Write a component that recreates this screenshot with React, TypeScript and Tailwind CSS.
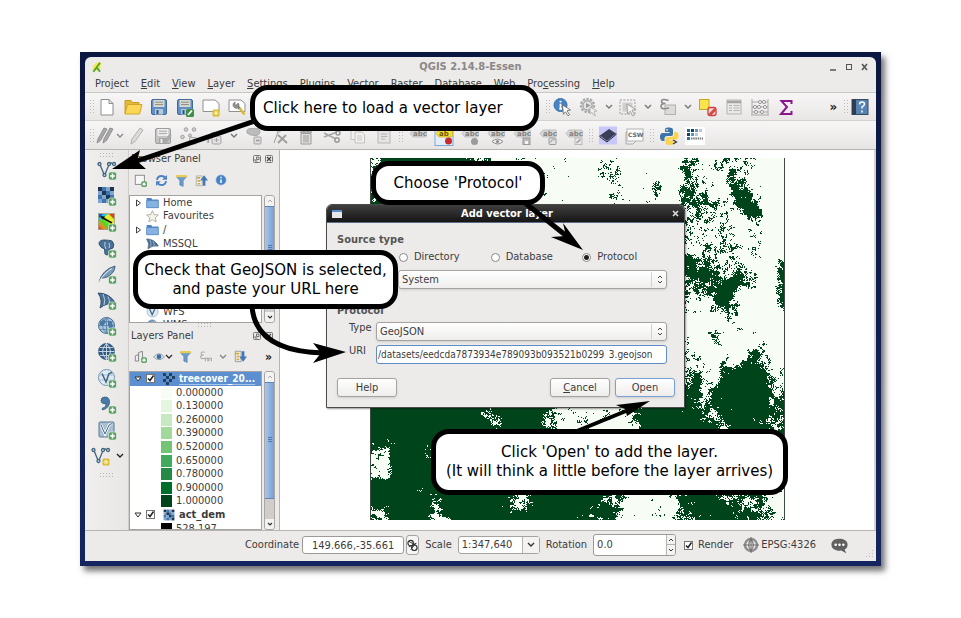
import React from "react";

const INK = "#3c3c3c";

/* ---------- tree cover raster ---------- */

const MAP_W = 415;
const MAP_H = 362;

// One digit per 10x10 block: 0 is bare ground, 9 is closed canopy.
const COVER = [
  "399999999955433211111012210100053034552100000",
  "499999999955433211121125310200054024641100001",
  "499999999954333211011012420240156402631010000",
  "699999999943333212110001440150065413983100010",
  "699999999943333211110001210120065442498100032",
  "699999999943333211110001010010044344389100000",
  "699999999943333210000000000000043434304010100",
  "699999999943333210000000000000032333424100000",
  "699999999943333210000000000000042333424100010",
  "699999999943333210000000000000022343425000030",
  "699999999943333210000000000000088443330029301",
  "699999999943333210000000000000089975553028200",
  "699999999943333210000000000000067466753018532",
  "699999999943333210000000000000064489411019764",
  "699999999943333210000000000000040178311017863",
  "699999999943333210000000000000022014520003974",
  "699999999943333210000000000000020103510001492",
  "699999999943333210000000000000010352113101392",
  "699999999943333210000000000000041131012410291",
  "699999999943333210000000000000054201017202363",
  "699999999943333210000000000000032115398501565",
  "699999999943333210000000000000055417999634685",
  "999999999999999999999999999999956349999844775",
  "999999999999999999999999999999977379999945677",
  "999999999999999999423112113699997589999856666",
  "999999999993999996312212124999987447988865558",
  "999999999999399994211312113899999757998655747",
  "999999999999799995321312213999999997999886568",
  "668999999999999999999999999999999999999999999",
  "429996899999999999999999999999999999999999999",
  "119999799999999999999999999999999999999999999",
  "329999999999999999999999999999999999999999999",
  "899986899999999999999999999999999999999999999",
  "999999699999994489999888641223577764677421299",
  "999999499999983599988776521111488986545521149",
  "349999299999987999998877631111378898877641128",
  "889999213799999999999977641211168999988522013",
];

function hash(x: number, y: number, s: number) {
  let h = Math.imul(x, 374761393) ^ Math.imul(y, 668265263) ^ Math.imul(s, 2147483647);
  h = Math.imul(h ^ (h >>> 13), 1274126177);
  h ^= h >>> 16;
  return (h >>> 0) / 4294967296;
}

function valueNoise(x: number, y: number, s: number) {
  const xi = Math.floor(x);
  const yi = Math.floor(y);
  const fx = x - xi;
  const fy = y - yi;
  const u = fx * fx * (3 - 2 * fx);
  const v = fy * fy * (3 - 2 * fy);
  const a = hash(xi, yi, s);
  const b = hash(xi + 1, yi, s);
  const c = hash(xi, yi + 1, s);
  const d = hash(xi + 1, yi + 1, s);
  return a + (b - a) * u + (c - a) * v + (a - b - c + d) * u * v;
}

function coverAt(x: number, y: number) {
  const gx = Math.max(0, x / 10 - 0.5);
  const gy = Math.max(0, y / 10 - 0.5);
  const c = Math.min(43, Math.floor(gx));
  const r = Math.min(COVER.length - 2, Math.floor(gy));
  const fx = gx - c;
  const fy = Math.min(1, gy - r);
  const g = (rr: number, cc: number) => Number(COVER[rr][cc]);
  return (
    (g(r, c) * (1 - fx) + g(r, c + 1) * fx) * (1 - fy) +
    (g(r + 1, c) * (1 - fx) + g(r + 1, c + 1) * fx) * fy
  );
}

function buildCoverPath() {
  let d = "";
  for (let y = 0; y < MAP_H; y++) {
    let start = -1;
    for (let x = 0; x <= MAP_W; x++) {
      let dark = false;
      if (x < MAP_W) {
        const n =
          valueNoise(x / 8, y / 9, 1) * 0.3 +
          valueNoise(x / 3, y / 3, 2) * 0.4 +
          hash(x, y, 3) * 0.3;
        const t = Math.min(1, Math.max(0, (n - 0.5) * 1.6 + 0.5));
        dark = coverAt(x, y) / 9 > 0.1 + t * 0.86;
      }
      if (dark && start < 0) start = x;
      if (!dark && start >= 0) {
        d += `M${start} ${y}h${x - start}v1h${start - x}z`;
        start = -1;
      }
    }
  }
  return d;
}

const coverPath = buildCoverPath();

/* ---------- small drawings ---------- */

type P = { children?: React.ReactNode; className?: string };

function Ico({ children, className = "h-5 w-5" }: P) {
  return (
    <svg viewBox="0 0 20 20" className={`shrink-0 ${className}`} fill="none" aria-hidden="true">
      {children}
    </svg>
  );
}

function Tool({ label, children, className = "w-[26px]" }: P & { label: string }) {
  return (
    <button type="button" aria-label={label} className={`flex h-6 shrink-0 items-center justify-center ${className}`}>
      {children}
    </button>
  );
}

function Chevron({ color = "#555" }: { color?: string }) {
  return (
    <svg viewBox="0 0 8 6" className="h-[6px] w-2 shrink-0" fill="none" aria-hidden="true">
      <path d="M1 1l3 3 3-3" stroke={color} strokeWidth="1.4" />
    </svg>
  );
}

function Handle() {
  return (
    <svg viewBox="0 0 4 14" className="h-[14px] w-1 shrink-0" aria-hidden="true">
      {[0, 3, 6, 9, 12].map((y) => (
        <g key={y} fill="#bdbab8">
          <rect x="0" y={y} width="1" height="1" />
          <rect x="3" y={y} width="1" height="1" />
        </g>
      ))}
    </svg>
  );
}

function GripRow() {
  return (
    <svg viewBox="0 0 13 4" className="h-1 w-[13px] shrink-0" aria-hidden="true">
      {[0, 3, 6, 9, 12].map((x) => (
        <g key={x} fill="#b5b2b0">
          <rect x={x} y="0" width="1" height="1" />
          <rect x={x} y="3" width="1" height="1" />
        </g>
      ))}
    </svg>
  );
}

function Plus() {
  return (
    <g>
      <rect x="11.500" y="12" width="8" height="8" rx="2" fill="#5a9e62" stroke="#e9f3ea" strokeWidth="0.600" />
      <path d="M15.500 13.600v4.800M13.100 16h4.800" stroke="#fff" strokeWidth="1.600" />
    </g>
  );
}

function Star() {
  return (
    <g>
      <rect x="11.500" y="12.500" width="7" height="7" rx="1.500" fill="#d8b92c" />
      <path d="M15 13.500v5M12.500 16h5M13.300 14.300l3.400 3.400M16.700 14.300l-3.400 3.400" stroke="#fff6b8" strokeWidth="0.900" />
    </g>
  );
}

function Sheet() {
  return <path d="M4 2.500h8l4 4v11.500h-12z M12 2.500v4h4" fill="#fff" stroke="#8c8c8c" />;
}

function Floppy({ gray = false }: { gray?: boolean }) {
  return (
    <g>
      <rect x="2.500" y="2.500" width="15" height="15" rx="1.500" fill={gray ? "#c4c3c2" : "#5f8fc4"} stroke={gray ? "#9d9d9d" : "#3e6b9e"} />
      <rect x="4.500" y="3" width="11" height="7" fill={gray ? "#ececec" : "#d9d9d0"} />
      <path d="M6 5.200h8M6 7.600h8" stroke={gray ? "#a5a5a5" : "#8b8b83"} />
      <rect x="6" y="12" width="8" height="5.500" fill={gray ? "#a5a5a5" : "#b7c9dc"} />
      <rect x="7.500" y="13" width="2" height="4" fill={gray ? "#eee" : "#2f5580"} />
    </g>
  );
}

function Vee({ color = "#41647f" }: { color?: string }) {
  return (
    <g stroke={color} strokeWidth="1.300">
      <path d="M3 4.500l4.500 11L12 4.500q2-3 4.500 0" />
      <g fill="#dfe8ef">
        <circle cx="2.500" cy="4" r="1.500" />
        <circle cx="7.500" cy="15" r="1.500" />
        <circle cx="12" cy="4" r="1.500" />
        <circle cx="17" cy="4" r="1.500" />
      </g>
    </g>
  );
}

const CHECK_TONES = ["#3f74ad", "#1f3650", "#7ea4cf"];
const CHECK_CELLS = [1, 0, 2, 1, 2, 1, 0, 2, 0, 2, 1, 0, 2, 0, 2, 1];

function Checks({ w = 16 }: { w?: number }) {
  const s = w / 4;
  return (
    <g>
      {CHECK_CELLS.map((t, i) => (
        <rect key={i} x={1 + (i % 4) * s} y={1 + Math.floor(i / 4) * s} width={s} height={s} fill={CHECK_TONES[t]} />
      ))}
    </g>
  );
}

function Globe({ dark = false }: { dark?: boolean }) {
  const f = dark ? "#33587c" : "#a9c5de";
  const s = dark ? "#cfe0ef" : "#5d85a8";
  return (
    <g>
      <circle cx="9.500" cy="9.500" r="8" fill={f} stroke="#456a8c" />
      <path d="M1.500 9.500h16M3 5.500h13M3 13.500h13M9.500 1.500v16M9.500 1.500q-8 8 0 16M9.500 1.500q8 8 0 16" stroke={s} strokeWidth="0.900" />
      {!dark && <path d="M3 6l4-3 2 3-3 4-3-1zM11 5l4 1 1 5-3 3-2-5z" fill="#4b77a1" />}
    </g>
  );
}

function Sail() {
  return (
    <g>
      <path d="M1 3q12 0 18 11-9-2-16 4 3-8-2-15z" fill="#4a7096" stroke="#324f6d" />
      <path d="M6 4q3 6 1 11M11 6.500q2 4 1.500 7.500" stroke="#b9cde0" />
    </g>
  );
}

function Funnel() {
  return (
    <g>
      <path d="M2 4h16l-5.500 6v9l-5-2v-7z" fill="#6c9bcf" stroke="#4776ab" />
      <rect x="1.500" y="1.500" width="17" height="3.500" rx="1" fill="#e4cd52" />
    </g>
  );
}

function Abc({ active = false, children }: { active?: boolean; children?: React.ReactNode }) {
  return (
    <Ico>
      {active && <rect x="1" y="0.500" width="18" height="19" fill="#e4eefb" stroke="#7ba7e0" />}
      <g transform="translate(0 1)">
        <path d="M2 6.500l3-3.500h12q1.500 0 1.500 1.500v4Q18.500 10 17 10H5z" fill={active ? "#f3df3c" : "#d9d8d7"} stroke={active ? "#c9ad1e" : "#b5b5b5"} strokeWidth="0.800" />
        <text x="5" y="9" fontSize="7" fontWeight="700" fontFamily="DejaVu Sans" fill={active ? "#6b5b08" : "#828282"}>
          {active ? "ab" : "abc"}
        </text>
      </g>
      {children}
    </Ico>
  );
}

/* ---------- toolbars ---------- */

const MENU: [string, string, string][] = [
  ["Pro", "j", "ect"],
  ["", "E", "dit"],
  ["", "V", "iew"],
  ["", "L", "ayer"],
  ["", "S", "ettings"],
  ["", "P", "lugins"],
  ["Vect", "o", "r"],
  ["", "R", "aster"],
  ["", "D", "atabase"],
  ["", "W", "eb"],
  ["Pro", "c", "essing"],
  ["", "H", "elp"],
];

function MainToolbar() {
  return (
    <div className="flex h-7 items-center border-b border-[#d3d0ce] bg-linear-to-b from-[#f7f6f6] to-[#e9e7e6] pl-[5px]" role="toolbar" aria-label="Project toolbar">
      <Handle />
      <Tool label="New project"><Ico><Sheet /></Ico></Tool>
      <Tool label="Open project">
        <Ico>
          <path d="M2 17V3.500h6l1.500 2H16V8" fill="#e3b93a" stroke="#c79a24" />
          <path d="M2 17l2.500-9.500H19L16.500 17z" fill="#fbd755" stroke="#d2a62d" />
        </Ico>
      </Tool>
      <Tool label="Save project"><Ico><Floppy /></Ico></Tool>
      <Tool label="Save project as">
        <Ico>
          <Floppy />
          <rect x="11" y="12" width="8" height="8" rx="1.500" fill="#3f8f4b" />
          <path d="M13 18l4-4.500" stroke="#fff" strokeWidth="1.800" />
        </Ico>
      </Tool>
      <Tool label="New print composer">
        <Ico><path d="M2 3h12l4 3.500v8H2z" fill="#fff" stroke="#909090" /><Star /></Ico>
      </Tool>
      <Tool label="Composer manager">
        <Ico>
          <path d="M2 3h12l4 3.500v8H2z" fill="#fff" stroke="#909090" />
          <path d="M9 8l4 4" stroke="#777" strokeWidth="2.500" />
          <path d="M12.500 11l5 6.500" stroke="#d9b93a" strokeWidth="2.600" />
          <path d="M6 8q0-2 2-3v3l2 .5 1-2.500q2 2 .5 4T8 11q-2-1-2-3z" fill="#999" stroke="#6f6f6f" strokeWidth="0.700" />
        </Ico>
      </Tool>
      <div className="w-[296px] shrink-0" />
      <Handle />
      <Tool label="Identify features">
        <Ico>
          <circle cx="7.500" cy="8" r="6.500" fill="#4583c4" stroke="#3a70aa" />
          <path d="M7.500 6.800v5M6.300 11.800h2.600M7.500 3.800v1.600" stroke="#fff" strokeWidth="1.800" />
          <path d="M9.500 8l8 5-3.500.8 2.500 4-1.500 1-2.600-4-2 2.500z" fill="#fff" stroke="#6f6f6f" strokeWidth="0.900" />
        </Ico>
      </Tool>
      <Tool label="Run feature action">
        <Ico>
          <circle cx="8.500" cy="8.500" r="6.500" stroke="#a9a9a9" strokeWidth="2.400" strokeDasharray="2.200 1.400" fill="#d8d7d6" />
          <circle cx="8.500" cy="8.500" r="4.500" stroke="#9b9b9b" fill="#e4e4e4" />
          <path d="M7 6l4.500 2.500L7 11z" fill="#999" />
          <path d="M11 10l7 4-3 .8 1.500 3.500-1.500.5-2-3.300-2 1.500z" fill="#eee" stroke="#aaa" strokeWidth="0.800" />
        </Ico>
      </Tool>
      <Tool label="Action options" className="w-[13px]"><Chevron color="#777" /></Tool>
      <Tool label="Select features">
        <Ico>
          <rect x="2" y="3" width="15" height="14" stroke="#999" strokeDasharray="2 1.400" />
          <rect x="4.500" y="5.500" width="10" height="9" fill="#cfcecd" />
          <path d="M9 7l9 5.500-4 .7 2.500 4.800-2 .8-2.300-4.600L9.500 17z" fill="#f4f4f4" stroke="#999" strokeWidth="0.900" />
        </Ico>
      </Tool>
      <Tool label="Select options" className="w-[14px]"><Chevron color="#777" /></Tool>
      <Tool label="Select by expression">
        <Ico>
          <rect x="7" y="8" width="10.500" height="9.500" fill="#dcdbda" stroke="#b0b0b0" />
          <path d="M10.500 3.500Q3.500 1 3.500 4.500q0 2 4 2-4.500 0-4.500 3 0 3.500 8 1.500" stroke="#8a8a8a" strokeWidth="1.600" />
        </Ico>
      </Tool>
      <Tool label="Expression options" className="w-[14px]"><Chevron color="#777" /></Tool>
      <Tool label="Deselect all">
        <Ico>
          <rect x="1.500" y="2.500" width="9.500" height="10" fill="#fbe34e" stroke="#c7a91f" />
          <rect x="10" y="10.500" width="8" height="8" rx="2" fill="#f7d4d2" stroke="#cf3e3a" strokeWidth="1.300" />
          <path d="M11 17.500l6-6M12.500 18l5-5" stroke="#cf3e3a" strokeWidth="1.200" />
        </Ico>
      </Tool>
      <Tool label="Open attribute table">
        <Ico>
          <rect x="3" y="3" width="14" height="14" fill="#e9e9e8" stroke="#b4b3b2" />
          <path d="M3 5h14" stroke="#a5a4a3" strokeWidth="2.500" />
          <path d="M5 8.500h3M9.500 8.500h6M5 11h3M9.500 11h6M5 13.500h3M9.500 13.500h6" stroke="#b5b4b3" />
        </Ico>
      </Tool>
      <Tool label="Field calculator">
        <Ico>
          <path d="M2 2v16M18 2v16M2 5h16M2 10h16M2 15h16M1 18h18" stroke="#a8a7a6" />
          <g fill="#f3f3f3" stroke="#8f8f8f" strokeWidth="0.900">
            <circle cx="10" cy="5" r="1.600" /><circle cx="14" cy="5" r="1.600" />
            <circle cx="5" cy="10" r="1.600" /><circle cx="9" cy="10" r="1.600" /><circle cx="15" cy="10" r="1.600" />
            <circle cx="6" cy="15" r="1.600" /><circle cx="12" cy="15" r="1.600" />
          </g>
        </Ico>
      </Tool>
      <Tool label="Statistics">
        <Ico><path d="M15.500 7V4H5.500L11 10l-6 7H15.500V14" stroke="#8b158b" strokeWidth="2" /></Ico>
      </Tool>
      <span className="ml-auto pr-[7px] text-[13px] font-bold leading-4 text-[#222]">»</span>
      <Handle />
      <Tool label="Help contents" className="mr-1 w-6">
        <Ico>
          <rect x="2" y="2.500" width="16" height="15" fill="#5583b4" stroke="#3a4a5d" />
          <rect x="2" y="2.500" width="4" height="15" fill="#2f3d4e" />
          <path d="M9.500 7.500q0-2.500 2.500-2.500t2.500 2q0 1.500-2.500 3v1.500M12 13.500v2" stroke="#fff" strokeWidth="1.500" />
        </Ico>
      </Tool>
    </div>
  );
}

function EditToolbar() {
  return (
    <div className="flex h-7 items-center bg-linear-to-b from-[#f7f6f6] to-[#e7e5e4] pl-[5px] pt-px" role="toolbar" aria-label="Digitizing toolbar">
      <Handle />
      <Tool label="Current edits" className="w-[22px]">
        <Ico>
          <path d="M2 17l1-4L9 2l3 1-6.500 11.500zM8 17l1-4 6-11 3 1-6.500 11.500z" fill="#a9a9a9" stroke="#919191" />
        </Ico>
      </Tool>
      <Tool label="Edit options" className="w-2"><Chevron color="#8a8a8a" /></Tool>
      <Tool label="Toggle editing" className="w-[26px]">
        <Ico><path d="M4 18l1-5L13 2l3 2-8 11.500z" fill="#dcdbda" stroke="#b3b2b1" /></Ico>
      </Tool>
      <Tool label="Save edits">
        <Ico><Floppy gray /><path d="M12 17l5.500-8" stroke="#a9a9a9" strokeWidth="3" /></Ico>
      </Tool>
      <Tool label="Add feature">
        <Ico>
          <g fill="#cfcfce" stroke="#a2a2a2"><circle cx="7" cy="3.500" r="1.800" /><circle cx="15" cy="3.500" r="1.800" /><circle cx="3.500" cy="11" r="1.800" /><circle cx="11" cy="9.500" r="1.500" /></g>
          <rect x="10.500" y="11.500" width="7" height="6.500" rx="1.500" fill="#e5e5e4" stroke="#a5a5a5" />
        </Ico>
      </Tool>
      <Tool label="Move feature" className="w-[25px]">
        <Ico>
          <path d="M3 17q1-12 8-10t6-3" stroke="#aaa" strokeWidth="1.800" />
          <rect x="7" y="10" width="9" height="8" rx="1.500" fill="#e3e2e1" stroke="#a1a1a1" />
          <path d="M11.500 12v4M9.500 14h4" stroke="#a1a1a1" />
        </Ico>
      </Tool>
      <Tool label="Digitizing options" className="w-[14px]"><Chevron color="#777" /></Tool>
      <Tool label="Rotate feature">
        <Ico>
          <path d="M3 7q-1-5 5-4.500 8-1 8 3T11 9.500 3 7z" fill="#bbb" stroke="#a8a8a8" />
          <rect x="10" y="11" width="7" height="7" rx="1" fill="#ddd" stroke="#a3a3a3" />
          <path d="M12 14.500h3.500" stroke="#999" strokeWidth="1.500" />
        </Ico>
      </Tool>
      <Tool label="Node tool">
        <Ico>
          <path d="M4 17L8 6l5-2" stroke="#9d9d9d" />
          <path d="M8 9l9 8M16 9l-8 8" stroke="#9f9f9f" strokeWidth="2" />
          <circle cx="8" cy="6" r="1.500" fill="#bbb" />
        </Ico>
      </Tool>
      <Tool label="Delete selected">
        <Ico>
          <path d="M4 6h12M8 6V4h4v2" stroke="#9a9a9a" strokeWidth="1.500" />
          <path d="M5 7.500h10V18H5z" fill="#dfdedd" stroke="#9a9a9a" />
          <path d="M8 9v7.500M10 9v7.500M12 9v7.500" stroke="#9a9a9a" />
        </Ico>
      </Tool>
      <Tool label="Cut features">
        <Ico>
          <path d="M2 7l12 6M15 6L2 11" stroke="#a8a8a8" strokeWidth="1.800" />
          <circle cx="15" cy="14" r="2.200" stroke="#9a9a9a" strokeWidth="1.500" /><circle cx="16" cy="7" r="2" stroke="#9a9a9a" strokeWidth="1.500" />
        </Ico>
      </Tool>
      <Tool label="Copy features">
        <Ico>
          <rect x="3" y="2.500" width="9" height="11" fill="#f1f0ef" stroke="#c2c1c0" />
          <path d="M7 6h7l2.500 2.500V17H7z" fill="#f1f0ef" stroke="#c2c1c0" />
          <path d="M9 10h5M9 12h5M9 14h5" stroke="#c8c7c6" />
        </Ico>
      </Tool>
      <Tool label="Paste features">
        <Ico>
          <rect x="4" y="3" width="12" height="14" fill="#e5e4e3" stroke="#b7b6b5" />
          <rect x="7" y="1.500" width="6" height="3" fill="#a9a8a7" />
          <path d="M7 8h6M7 10.500h6M7 13h4" stroke="#b4b3b2" />
        </Ico>
      </Tool>
      <div className="flex w-2 justify-center"><Handle /></div>
      <Tool label="Layer labeling options"><Abc /></Tool>
      <Tool label="Highlight pinned labels"><Abc active><circle cx="14.500" cy="15" r="3.500" fill="#c92a2f" /></Abc></Tool>
      <Tool label="Pin labels"><Abc><circle cx="14.500" cy="15.500" r="3.500" fill="#9b9b9b" /></Abc></Tool>
      <Tool label="Show or hide labels"><Abc><path d="M6 15.500q5-5 11 0-5 5-11 0z" fill="#eee" stroke="#8d8d8d" /><circle cx="11.500" cy="15.500" r="1.600" fill="#8d8d8d" /></Abc></Tool>
      <Tool label="Move label"><Abc><rect x="11" y="12" width="7" height="6.500" fill="#bbb" stroke="#999" /><rect x="13" y="15" width="3" height="3" fill="#f5f5f5" /></Abc></Tool>
      <Tool label="Rotate label"><Abc><rect x="11" y="12" width="7" height="6.500" rx="1" fill="#e3e3e3" stroke="#999" /><path d="M12.500 16.500q0-3 4-3" stroke="#999" /></Abc></Tool>
      <Tool label="Change label"><Abc><rect x="11" y="12" width="7" height="6.500" fill="#e9e9e9" stroke="#bbb" /><path d="M12.500 17l4-3.500" stroke="#999" strokeWidth="1.500" /></Abc></Tool>
      <div className="flex w-2 justify-center"><Handle /></div>
      <Tool label="Metasearch catalogue">
        <Ico><rect x="1" y="0.500" width="18" height="18" fill="#c7c8f7" /><path d="M2 9.500L11 3l7 4.500L9 15z" fill="#3b3e55" /><path d="M2 9.500V11l7 5 9-7.500V7.500" stroke="#23253a" /></Ico>
      </Tool>
      <Tool label="CSW search">
        <Ico>
          <path d="M2 18V6h8M2 18h7l3-3" fill="#f2f2f2" stroke="#aaa" />
          <rect x="3" y="3" width="16" height="12" fill="#fff" stroke="#b2b2b2" />
          <text x="4" y="11" fontSize="6" fontWeight="700" fontFamily="DejaVu Sans" fill="#666">CSW</text>
        </Ico>
      </Tool>
      <div className="flex w-[9px] justify-center"><Handle /></div>
      <Tool label="Python console">
        <Ico>
          <path d="M10 1.500c-4 0-4 1.200-4 2.500v2h4.500v1H4c-2.500 0-3 2-3 4s1 4 3 4h1.500v-2.500c0-1.500 1-2.500 2.500-2.500h4c1.500 0 2-1 2-2V4c0-1.500-1-2.500-4-2.500z" fill="#3b74a8" />
          <path d="M10.500 19c4 0 4-1.200 4-2.500v-2H10v-1h6.500c2.500 0 3-2 3-4s-1-3.500-3-3.500H15V8.500C15 10 14 11 12.500 11h-4c-1.500 0-2 1-2 2v3.500c0 1.500 1 2.500 4 2.500z" fill="#f9d44b" />
          <circle cx="8" cy="3.800" r="0.900" fill="#fff" />
          <path d="M14 14l3.500 2-3.500 2" stroke="#333" strokeWidth="1.200" />
        </Ico>
      </Tool>
      <Tool label="GeoScript services">
        <Ico>
          <rect x="0" y="1" width="20" height="18" fill="#fff" />
          <g>
            <rect x="2" y="3" width="3" height="3" fill="#1d6a8a" /><rect x="6" y="3" width="3" height="3" fill="#15435e" /><rect x="10" y="3" width="3" height="3" fill="#5c9ab3" /><rect x="14" y="3" width="3" height="3" fill="#c3c3dd" />
            <rect x="2" y="7" width="3" height="3" fill="#15435e" /><rect x="6" y="7" width="3" height="3" fill="#5c9ab3" /><rect x="10" y="7" width="3" height="3" fill="#c3c3dd" /><rect x="2" y="11" width="3" height="3" fill="#2c7898" />
          </g>
          <path d="M6 12.500h12" stroke="#777" strokeWidth="2" strokeDasharray="1.500 0.700" />
        </Ico>
      </Tool>
    </div>
  );
}

function LayerToolbar() {
  return (
    <div className="flex w-11 shrink-0 flex-col items-center border-r border-[#cfccca] bg-linear-to-r from-[#f0efee] to-[#e9e7e6] pt-[3px]" role="toolbar" aria-label="Manage layers">
      <GripRow />
      <div className="grid auto-rows-[26px] items-center justify-items-center">
        <Tool label="Add vector layer"><Ico><Vee /><Plus /></Ico></Tool>
        <Tool label="Add raster layer"><Ico><Checks /><Plus /></Ico></Tool>
        <Tool label="Add raster colour layer">
          <Ico>
            <defs>
              <linearGradient id="rainbow" x1="1" y1="0" x2="0" y2="1">
                <stop offset="0" stopColor="#9bd92f" /><stop offset=".35" stopColor="#f4ef2b" /><stop offset=".6" stopColor="#41d92f" />
                <stop offset=".8" stopColor="#f08f1c" /><stop offset="1" stopColor="#df261f" />
              </linearGradient>
            </defs>
            <rect x="1.500" y="1.500" width="16" height="16" fill="url(#rainbow)" stroke="#888" strokeWidth="0.600" />
            <path d="M2 2h9L2 9z" fill="#26c5e8" />
            <path d="M2 2h4L2 6z" fill="#2d3fe0" />
            <path d="M17 2v5l-5-5z" fill="#e8391f" />
            <path d="M4 5l11 6" stroke="#111" strokeWidth="1.800" /><path d="M3 4l5 .5-2 3z" fill="#111" /><Plus />
          </Ico>
        </Tool>
        <Tool label="Add PostGIS layer">
          <Ico><path d="M2 6q0-4 5-4t8 1q3 3 1 7l-3 1-1 5q-2 2-4 0l-.5-5q-4-1-5.500-5z" fill="#4a7196" stroke="#33536f" /><path d="M8 4q-1 4 1 7M12 5q1 3 0 5" stroke="#bcd0e2" /><Plus /></Ico>
        </Tool>
        <Tool label="Add SpatiaLite layer">
          <Ico><path d="M2 18Q5 6 18 2q0 7-8 11-3 1-5 1" fill="#7c9bb8" stroke="#41607c" /><path d="M2 18Q7 9 15 4.500" stroke="#e6eef5" /><Plus /></Ico>
        </Tool>
        <Tool label="Add MSSQL layer"><Ico><Sail /><Plus /></Ico></Tool>
        <Tool label="Add WMS layer"><Ico><Globe /><Plus /></Ico></Tool>
        <Tool label="Add WCS layer"><Ico><Globe dark /><Plus /></Ico></Tool>
        <Tool label="Add WFS layer">
          <Ico><circle cx="9.500" cy="9.500" r="8" fill="#dfe9f2" stroke="#6f93b3" /><path d="M2 7h15M2 12h15" stroke="#a5bfd6" /><path d="M5 5.500l4 8.500 3-8.500 3-1" stroke="#41647f" strokeWidth="1.500" /><Plus /></Ico>
        </Tool>
        <Tool label="Add delimited text layer">
          <Ico><path d="M5 14.500q5-1.500 4-5-4.500 1-5-3 0-3.500 4-3.500 4.500 0 4.500 5 0 6-7 8z" fill="#4a7ba8" stroke="#36597b" strokeWidth="0.800" /><Plus /></Ico>
        </Tool>
        <Tool label="Add virtual layer">
          <Ico><rect x="2" y="2" width="15" height="15" rx="1" fill="#a9bfd3" stroke="#587892" /><path d="M4 5l4 9 4-9 3-1.500" stroke="#fff" strokeWidth="2.500" /><path d="M4 5l4 9 4-9 3-1.500" stroke="#41647f" /><Plus /></Ico>
        </Tool>
        <div className="flex items-center">
          <Tool label="New shapefile layer"><Ico><Vee /><Star /></Ico></Tool>
          <Tool label="New layer options" className="w-3"><Chevron color="#222" /></Tool>
        </div>
      </div>
      <div className="pt-1"><GripRow /></div>
    </div>
  );
}

/* ---------- dock panels ---------- */

function PanelTitle({ text }: { text: string }) {
  return (
    <div className="flex h-[17px] items-center gap-1 pl-[2px] pr-[6px]">
      <h2 className="grow">{text}</h2>
      <button type="button" aria-label={`Float ${text}`}>
        <svg viewBox="0 0 8 8" className="h-2 w-2" fill="none"><rect x=".5" y=".5" width="7" height="7" rx="1" stroke="#777" /><path d="M3.500 2h2.500v2.500H3.500zM2 4v2h2.500" stroke="#555" strokeWidth=".8" /></svg>
      </button>
      <button type="button" aria-label={`Close ${text}`}>
        <svg viewBox="0 0 8 8" className="h-2 w-2" fill="none"><rect x=".5" y=".5" width="7" height="7" rx="1" stroke="#777" /><path d="M2 2l4 4M6 2L2 6" stroke="#444" strokeWidth="1.200" /></svg>
      </button>
    </div>
  );
}

function ScrollBar({ className = "" }: { className?: string }) {
  return (
    <div className="ml-[2px] flex w-[11px] shrink-0 flex-col rounded-t-[3px] rounded-b-[3px] border border-[#a9a6a4] bg-[#d0cdcb]" aria-hidden="true">
      <div className="flex h-[10px] shrink-0 items-center justify-center rounded-t-[2px] bg-[#f4f3f2]">
        <svg viewBox="0 0 6 4" className="h-1 w-[6px]" fill="none"><path d="M1 3l2-2 2 2" stroke="#aaa" /></svg>
      </div>
      <div className={`flex items-center justify-center border-y border-[#5c86bd] bg-linear-to-r from-[#a9c6ea] to-[#76a0d6] ${className}`}>
        <svg viewBox="0 0 4 6" className="h-[6px] w-1"><path d="M0 .5h4M0 2.500h4M0 4.500h4" stroke="#4d78b0" /></svg>
      </div>
      <div className="grow" />
      <div className="flex h-[10px] shrink-0 items-center justify-center rounded-b-[2px] bg-[#f4f3f2]">
        <svg viewBox="0 0 6 4" className="h-1 w-[6px]" fill="none"><path d="M1 1l2 2 2-2" stroke="#333" strokeWidth="1.200" /></svg>
      </div>
    </div>
  );
}

function Folder() {
  return (
    <Ico className="h-[13px] w-[13px]">
      <path d="M1 3h7l1.500 2.500H19V18H1z" fill="#4e82bd" />
      <path d="M1 7h18v11H1z" fill="#86b2e2" stroke="#4e82bd" />
    </Ico>
  );
}

const BROWSER: { name: string; branch?: boolean; icon: React.ReactNode; row: string }[] = [
  { name: "Home", row: "row-start-1", branch: true, icon: <Folder /> },
  { name: "Favourites", row: "row-start-2", icon: <Ico className="h-[13px] w-[13px]"><path d="M10 1l2.700 6 6.300.7-4.700 4.200 1.400 6.300L10 15l-5.700 3.200 1.400-6.300L1 7.700 7.300 7z" fill="#f5f4ea" stroke="#a9a897" strokeWidth="1.300" /></Ico> },
  { name: "/", row: "row-start-3", branch: true, icon: <Folder /> },
  { name: "MSSQL", row: "row-start-4", icon: <Ico className="h-[13px] w-[13px]"><Sail /></Ico> },
  { name: "WFS", row: "row-start-9", icon: <Ico className="h-[13px] w-[13px]"><circle cx="10" cy="10" r="8.500" fill="#dfe9f2" stroke="#8aa9c4" /><path d="M5 5l4.500 10L14 5" stroke="#41647f" strokeWidth="2" /></Ico> },
  { name: "WMS", row: "row-start-10", icon: <Ico className="h-[13px] w-[13px]"><Globe /></Ico> },
];

function BrowserPanel() {
  return (
    <section aria-label="Browser Panel">
      <PanelTitle text="Browser Panel" />
      <div className="flex h-7 items-center pb-[2px]">
        <Tool label="Add layer" className="w-[22px]">
          <Ico className="h-[13px] w-[13px]"><rect x="2" y="2" width="14" height="14" fill="#f7f7f6" stroke="#8c8c8c" strokeWidth="1.500" /><rect x="11" y="11" width="9" height="9" rx="3" fill="#5a9e62" /><path d="M15.500 12.500v6M12.500 15.500h6" stroke="#fff" strokeWidth="1.800" /></Ico>
        </Tool>
        <Tool label="Refresh" className="w-5">
          <Ico className="h-[13px] w-[13px]"><path d="M3 9q1-6 7-6 4 0 6 3M17 11q-1 6-7 6-4 0-6-3" stroke="#4d83c4" strokeWidth="3" /><path d="M18.500 1.500V9H11zM1.500 18.500V11H9z" fill="#4d83c4" /></Ico>
        </Tool>
        <Tool label="Filter browser" className="w-5"><Ico className="h-[13px] w-[13px]"><Funnel /></Ico></Tool>
        <Tool label="Collapse all" className="w-5">
          <Ico className="h-[13px] w-[13px]"><path d="M2 3h9v15H2z" fill="#eee" stroke="#999" /><path d="M3 6h5M4 10.500h4M4 15h4" stroke="#d9a93c" strokeWidth="2.500" /><path d="M12 18V10H8l6-8 6 8h-4v8z" fill="#4378b5" /></Ico>
        </Tool>
        <Tool label="Properties" className="w-5">
          <Ico className="h-3 w-3"><circle cx="10" cy="10" r="8.500" fill="#4583c4" stroke="#8fb4de" /><path d="M10 9v6M10 4.500v2.500" stroke="#fff" strokeWidth="2.500" /></Ico>
        </Tool>
      </div>
      <div className="flex h-[128px]">
        <div className="w-[133px] overflow-hidden border border-[#a5a2a0] bg-white">
          <ul className="grid h-[136px] grid-rows-[repeat(10,minmax(0,1fr))]">
            {BROWSER.map((b) => (
              <li key={b.name} className={`flex items-center gap-1 pl-[5px] leading-3 ${b.row}`}>
                <svg viewBox="0 0 7 8" className="h-2 w-[7px]" fill="none">{b.branch && <path d="M1.500 1v6l4-3z" stroke="#444" />}</svg>
                {b.icon}
                <span>{b.name}</span>
              </li>
            ))}
          </ul>
        </div>
        <ScrollBar className="h-[84px]" />
      </div>
    </section>
  );
}

const CLASSES: [string, string][] = [
  ["0.000000", "bg-[#f7fcf5]"],
  ["0.130000", "bg-[#e5f5e0]"],
  ["0.260000", "bg-[#c7e9c0]"],
  ["0.390000", "bg-[#a1d99b]"],
  ["0.520000", "bg-[#74c476]"],
  ["0.650000", "bg-[#41ab5d]"],
  ["0.780000", "bg-[#238b45]"],
  ["0.900000", "bg-[#006d2c]"],
  ["1.000000", "bg-[#00441b]"],
];

function Tick({ label }: { label: string }) {
  return (
    <span className="relative flex h-[9px] w-[9px] shrink-0">
      <input type="checkbox" defaultChecked aria-label={label} className="h-[9px] w-[9px] appearance-none border border-[#777] bg-white" />
      <svg viewBox="0 0 9 9" className="pointer-events-none absolute inset-0" fill="none"><path d="M2 4.500l2 2 3.500-5" stroke="#222" strokeWidth="1.500" /></svg>
    </span>
  );
}

function OpenMark() {
  return <svg viewBox="0 0 8 6" className="h-[6px] w-2 shrink-0" fill="none"><path d="M1 1h6L4 5z" fill="#fff" stroke="#333" /></svg>;
}

function LayersPanel() {
  return (
    <section aria-label="Layers Panel" className="flex min-h-0 grow flex-col">
      <PanelTitle text="Layers Panel" />
      <div className="flex h-7 items-center pb-[2px]">
        <Tool label="Add group" className="w-[22px]">
          <Ico className="h-[13px] w-[13px]"><path d="M2 17V9l5-2v10zM7 17V4l6-2v15" fill="#eee" stroke="#888" strokeWidth="1.500" /><rect x="11" y="11" width="9" height="9" rx="3" fill="#5a9e62" /><path d="M15.500 12.500v6M12.500 15.500h6" stroke="#fff" strokeWidth="1.800" /></Ico>
        </Tool>
        <Tool label="Manage visibility" className="w-6">
          <Ico className="h-3 w-3"><path d="M1 10q9-11 18 0-9 9-18 0z" fill="#dfe6ee" stroke="#8a97a5" strokeWidth="1.500" /><circle cx="10" cy="9.500" r="4" fill="#3f6c9f" /></Ico>
          <Chevron color="#333" />
        </Tool>
        <Tool label="Filter legend" className="w-5"><Ico className="h-[13px] w-[13px]"><Funnel /></Ico></Tool>
        <Tool label="Filter by expression" className="w-[22px]">
          <Ico className="h-3 w-3"><path d="M8 2Q1 1 2 5q1 2 4 2-5 0-5 3 0 4 7 2M9 17v-5h4v5M15 17v-5h4v5" stroke="#aaa" strokeWidth="1.800" /></Ico>
        </Tool>
        <Tool label="Expression filter options" className="w-3"><Chevron color="#888" /></Tool>
        <Tool label="Expand all" className="w-[22px]">
          <Ico className="h-[13px] w-[13px]"><path d="M2 2h9v16H2z" fill="#eee" stroke="#777" /><path d="M3 5.500h5M4 10h4M4 14.500h4" stroke="#d9a93c" strokeWidth="2.500" /><path d="M12 2v8H8l6 8 6-8h-4V2z" fill="#4378b5" /></Ico>
        </Tool>
        <span className="ml-auto pr-[7px] text-[12px] font-bold text-[#222]">»</span>
      </div>
      <div className="flex min-h-0 grow">
        <div className="flex w-[133px] flex-col overflow-hidden border border-[#a5a2a0] bg-white">
          <div className="flex h-[14px] shrink-0 items-center gap-1 bg-[#5c8fd0] pl-1 font-bold text-white">
            <OpenMark />
            <Tick label="treecover_20..." />
            <span className="w-0" />
            <Ico className="h-3 w-3">
              <path d="M0 0h5v5H0zM10 0h5v5h-5zM5 5h5v5H5zM15 5h5v5h-5zM0 10h5v5H0zM10 10h5v5h-5zM5 15h5v5H5z" fill="#24405f" />
            </Ico>
            <span className="text-[10px] underline decoration-[#a9c6ea] underline-offset-2">treecover_20...</span>
          </div>
          <ul className="grid h-[122px] shrink-0 auto-rows-fr">
            {CLASSES.map(([v, c]) => (
              <li key={v} className="flex items-center gap-1 pl-[31px] leading-3">
                <span className={`h-3 w-[11px] ${c}`} />
                <span>{v}</span>
              </li>
            ))}
          </ul>
          <div className="flex h-[14px] shrink-0 items-center gap-1 pl-1 font-bold">
            <OpenMark />
            <Tick label="act_dem" />
            <span className="w-0" />
            <Ico className="h-3 w-3"><Checks w={18} /></Ico>
            <span>act_dem</span>
          </div>
          <div className="flex shrink-0 items-center gap-1 pl-[31px]">
            <span className="h-3 w-[11px] bg-black" />
            <span>528.197</span>
          </div>
        </div>
        <ScrollBar className="h-[117px]" />
      </div>
    </section>
  );
}

/* ---------- status bar ---------- */

function StatusBar() {
  return (
    <footer className="flex h-[31px] items-center justify-end border-t border-[#b7b4b2] bg-[#edebea] pb-[2px]">
      <label htmlFor="coord">Coordinate</label>
      <input id="coord" defaultValue="149.666,-35.661" className="ml-[3px] h-[18px] w-[102px] rounded-[3px] border border-[#9c9997] bg-white text-center" />
      <button type="button" aria-label="Toggle extents" className="ml-[2px] flex h-5 w-[13px] items-center justify-center rounded-[3px] border border-[#a5a2a0] bg-[#f6f5f5]">
        <svg viewBox="0 0 12 14" className="h-[14px] w-3" fill="none"><circle cx="4" cy="5" r="3" stroke="#333" strokeWidth="1.300" /><circle cx="8" cy="10" r="3" stroke="#333" strokeWidth="1.300" /><path d="M2 9l8-4M4 12l6-7M2 3l7 4" stroke="#333" /></svg>
      </button>
      <label htmlFor="scale" className="ml-[6px]">Scale</label>
      <div className="relative ml-[6px]">
        <select id="scale" className="h-[18px] w-[82px] appearance-none rounded-[3px] border border-[#a5a2a0] bg-white pl-[3px]"><option>1:347,640</option></select>
        <span className="pointer-events-none absolute inset-y-px right-px flex w-[17px] items-center justify-center border-l border-[#b5b2b0] bg-[#f4f3f2]"><Chevron color="#333" /></span>
      </div>
      <label htmlFor="rotation" className="ml-[6px]">Rotation</label>
      <div className="ml-[6px] flex h-[22px] w-[83px] overflow-hidden rounded-[3px] border border-[#9c9997] bg-white">
        <input id="rotation" defaultValue="0.0" className="w-[72px] pl-[3px]" />
        <div className="flex w-[9px] flex-col border-l border-[#b5b2b0] bg-[#f4f3f2]">
          <button type="button" aria-label="Rotate more" className="flex h-[10px] items-center justify-center border-b border-[#b5b2b0]"><svg viewBox="0 0 6 4" className="h-1 w-[6px]" fill="none"><path d="M1 3l2-2 2 2" stroke="#333" /></svg></button>
          <button type="button" aria-label="Rotate less" className="flex h-[10px] items-center justify-center"><svg viewBox="0 0 6 4" className="h-1 w-[6px]" fill="none"><path d="M1 1l2 2 2-2" stroke="#333" /></svg></button>
        </div>
      </div>
      <div className="ml-2 flex items-center gap-[5px]"><Tick label="Render" /><span>Render</span></div>
      <button type="button" className="ml-[10px] flex items-center gap-[2px]">
        <Ico className="h-4 w-4"><circle cx="10" cy="10" r="7.500" stroke="#8a8a8a" strokeWidth="3" /><path d="M10 0v20M0 10h20M10 3q-6 7 0 14M10 3q6 7 0 14" stroke="#707070" strokeWidth="1.300" /></Ico>
        EPSG:4326
      </button>
      <button type="button" aria-label="Messages" className="ml-[15px]">
        <Ico className="h-[17px] w-[17px]"><path d="M10 2c6 0 9.500 3 9.500 7 0 3-1.500 4.500-3.500 5.700L18 19l-6-3C5 16.500.5 13.500.5 9S4 2 10 2z" fill="#606060" /><circle cx="5.500" cy="9" r="1.500" fill="#fff" /><circle cx="10" cy="9" r="1.500" fill="#fff" /><circle cx="14.500" cy="9" r="1.500" fill="#fff" /></Ico>
      </button>
      <svg viewBox="0 0 9 9" className="ml-4 mr-[3px] h-[9px] w-[9px] self-end" fill="#c0bdbb"><path d="M8 0h1v1H8zM5 3h1v1H5zM8 3h1v1H8zM2 6h1v1H2zM5 6h1v1H5zM8 6h1v1H8z" /></svg>
    </footer>
  );
}

/* ---------- dialog ---------- */

function UpDown() {
  return (
    <span className="pointer-events-none absolute inset-y-[2px] right-0 flex w-4 items-center justify-center border-l border-[#d3d0ce]">
      <svg viewBox="0 0 6 9" className="h-[9px] w-[6px]" fill="none"><path d="M1 3l2-2 2 2M1 6l2 2 2-2" stroke="#444" /></svg>
    </span>
  );
}

const DIALOG_SELECT =
  "h-[19px] w-full appearance-none rounded-[3px] border border-[#a5a2a0] bg-linear-to-b from-white to-[#efeeed] pl-[3px] shadow-sm";
const DIALOG_BUTTON =
  "h-[19px] w-[60px] rounded-[3px] border bg-linear-to-b from-white to-[#eeedec] text-[11px] shadow-sm";

function Radio({ text, checked = false }: { text: string; checked?: boolean }) {
  return (
    <label className="flex w-[92px] items-center gap-[6px]">
      <input
        type="radio"
        name="source"
        defaultChecked={checked}
        className="h-[9px] w-[9px] appearance-none rounded-full border border-[#888] bg-white checked:bg-[radial-gradient(circle,#222_0,#222_2px,#fff_3px)]"
      />
      {text}
    </label>
  );
}

function VectorDialog() {
  return (
    <section role="dialog" aria-label="Add vector layer" className="absolute left-[326px] top-[204px] w-[359px] overflow-hidden rounded-t-md border border-[#4a4a4a] bg-[#edebea] text-[11px] shadow-[1px_1px_2px_rgba(0,0,0,0.4)]">
      <header className="flex h-[18px] items-center border-b border-[#5a6d8c] bg-linear-to-b from-[#3f3f3f] to-[#161616] px-[5px] text-white">
        <svg viewBox="0 0 10 8" className="h-2 w-[10px]"><rect width="10" height="8" fill="#e8e8e8" /><rect width="10" height="2" fill="#5b8fd0" /></svg>
        <h2 className="grow text-center font-bold">Add vector layer</h2>
        <button type="button" aria-label="Close"><svg viewBox="0 0 7 7" className="h-[7px] w-[7px]" fill="none"><path d="M1 1l5 5M6 1L1 6" stroke="#ddd" strokeWidth="1.600" /></svg></button>
      </header>
      <div className="flex flex-col px-[10px] pb-[10px] pt-[9px]">
        <h3 className="h-[15px] font-bold leading-[15px] text-[#555]">Source type</h3>
        <div className="flex h-5 items-center pl-[62px]">
          <Radio text="Directory" />
          <Radio text="Database" />
          <Radio text="Protocol" checked />
        </div>
        <div className="relative ml-[61px] mr-[7px] mt-[3px]">
          <select aria-label="Encoding" className={DIALOG_SELECT}><option>System</option></select>
          <UpDown />
        </div>
        <h3 className="mt-[14px] h-[15px] font-bold leading-[15px] text-[#555]">Protocol</h3>
        <div className="ml-3 mr-[7px] mt-1 grid grid-cols-[27px_1fr] gap-y-1">
          <label htmlFor="ptype" className="leading-3">Type</label>
          <div className="relative">
            <select id="ptype" className={DIALOG_SELECT}><option>GeoJSON</option></select>
            <UpDown />
          </div>
          <label htmlFor="uri" className="leading-3">URI</label>
          <input id="uri" defaultValue="/datasets/eedcda7873934e789093b093521b0299_3.geojson" className="h-[19px] w-full rounded-[3px] border border-[#5e8cc4] bg-white px-px text-[10px]" />
        </div>
        <div className="-mr-px mt-[14px] flex gap-[5px]">
          <button type="button" className={`${DIALOG_BUTTON} mr-auto border-[#a5a2a0]`}>Help</button>
          <button type="button" className={`${DIALOG_BUTTON} border-[#a5a2a0]`}><u>C</u>ancel</button>
          <button type="button" className={`${DIALOG_BUTTON} border-[#7ba0d2]`}>Open</button>
        </div>
      </div>
    </section>
  );
}

/* ---------- annotations ---------- */

const NOTE =
  "absolute flex items-center whitespace-nowrap rounded-[18px] border-[5px] border-black bg-white text-[15px] leading-[19px] text-black";

function Annotations() {
  return (
    <>
      <svg viewBox="0 0 961 618" className="pointer-events-none absolute left-0 top-0 h-[618px] w-[961px]" fill="none" aria-hidden="true">
        <g stroke="#000" strokeWidth="5">
          <path d="M258 120L134 162" />
          <path d="M524 202L569 238" />
          <path d="M252 306C254 336 278 352 324 353" />
          <path d="M577 431L626 411" strokeWidth="4" />
        </g>
        <g fill="#000">
          <path d="M112 169L140 150 137 161 146 169z" />
          <path d="M583 250L563 223 566 236 551 237z" />
          <path d="M346 352L313 343 321 353 313 363z" />
          <path d="M650 401L616 405 625 409 627 416z" />
        </g>
      </svg>
      <p className={`${NOTE} left-[250px] top-[85px] h-[46px] w-[289px] pl-2`}>Click here to load a vector layer</p>
      <p className={`${NOTE} left-[371px] top-[161px] h-[44px] w-[174px] justify-center`}>Choose &apos;Protocol&apos;</p>
      <p className={`${NOTE} left-[133px] top-[250px] h-[59px] w-[265px] justify-center text-center`}>
        Check that GeoJSON is selected,<br />and paste your URL here
      </p>
      <p className={`${NOTE} left-[431px] top-[429px] h-[66px] w-[357px] justify-center text-center`}>
        Click &apos;Open&apos; to add the layer.<br />(It will think a little before the layer arrives)
      </p>
    </>
  );
}

/* ---------- page ---------- */

export default function App() {
  return (
    <main className="relative min-h-screen bg-white px-20 pt-[52px] font-['DejaVu_Sans',sans-serif]">
      <div className="bg-linear-to-b from-[#0b1740] to-[#152560] p-[5px] shadow-[4px_5px_6px_rgba(0,0,0,0.55)]">
        <div className="flex flex-col overflow-hidden rounded-t-md bg-[#edebea] font-['DejaVu_Sans_Condensed','DejaVu_Sans',sans-serif] text-[11px] leading-[14px]" style={{ color: INK }}>
          <header className="flex h-[19px] items-center pl-[6px] pr-2">
            <Ico className="h-3 w-3">
              <path d="M3 17Q1 8 9 3l8-1-2 14z" fill="#f1e84e" />
              <path d="M4 18L15 3M9 10l6 8" stroke="#4ba23c" strokeWidth="3" />
            </Ico>
            <h1 className="grow pl-2 text-center font-bold text-[#8a8887]">QGIS 2.14.8-Essen</h1>
            <svg viewBox="0 0 38 8" className="h-2 w-[38px]" fill="none" stroke="#555">
              <path d="M0 7h6" strokeWidth="1.500" /><rect x="16.500" y="1.500" width="5" height="5" /><path d="M32 1l5 6M37 1l-5 6" strokeWidth="1.600" />
            </svg>
          </header>
          <nav className="flex h-[17px] items-center gap-3 border-b border-[#c9c6c4] pl-[10px]">
            {MENU.map(([a, k, b]) => (
              <a key={a + k + b} href="#menu">{a}<span className="underline underline-offset-1">{k}</span>{b}</a>
            ))}
          </nav>
          <MainToolbar />
          <EditToolbar />
          <div className="flex h-[381px] border-t border-[#b7b4b2]">
            <LayerToolbar />
            <aside className="flex w-[151px] shrink-0 flex-col border-r border-[#b7b4b2]">
              <BrowserPanel />
              <div className="flex h-[5px] items-center justify-center"><GripRow /></div>
              <LayersPanel />
            </aside>
            <div className="flex grow justify-center overflow-hidden border-r-2 border-[#d5d2d0] bg-white pt-2">
              <svg viewBox={`0 0 ${MAP_W} ${MAP_H}`} className="h-[362px] w-[415px] shrink-0" shapeRendering="crispEdges" role="img" aria-label="Tree cover map">
                <rect width={MAP_W} height={MAP_H} fill="#f7fcf5" />
                <path d={coverPath} fill="#00441b" />
                <path d="M.5 0V362M414.500 0V362" stroke="#3f4a42" />
              </svg>
            </div>
          </div>
          <StatusBar />
        </div>
      </div>
      <div className="font-['DejaVu_Sans_Condensed','DejaVu_Sans',sans-serif] leading-[14px]" style={{ color: INK }}>
        <VectorDialog />
      </div>
      <Annotations />
    </main>
  );
}
